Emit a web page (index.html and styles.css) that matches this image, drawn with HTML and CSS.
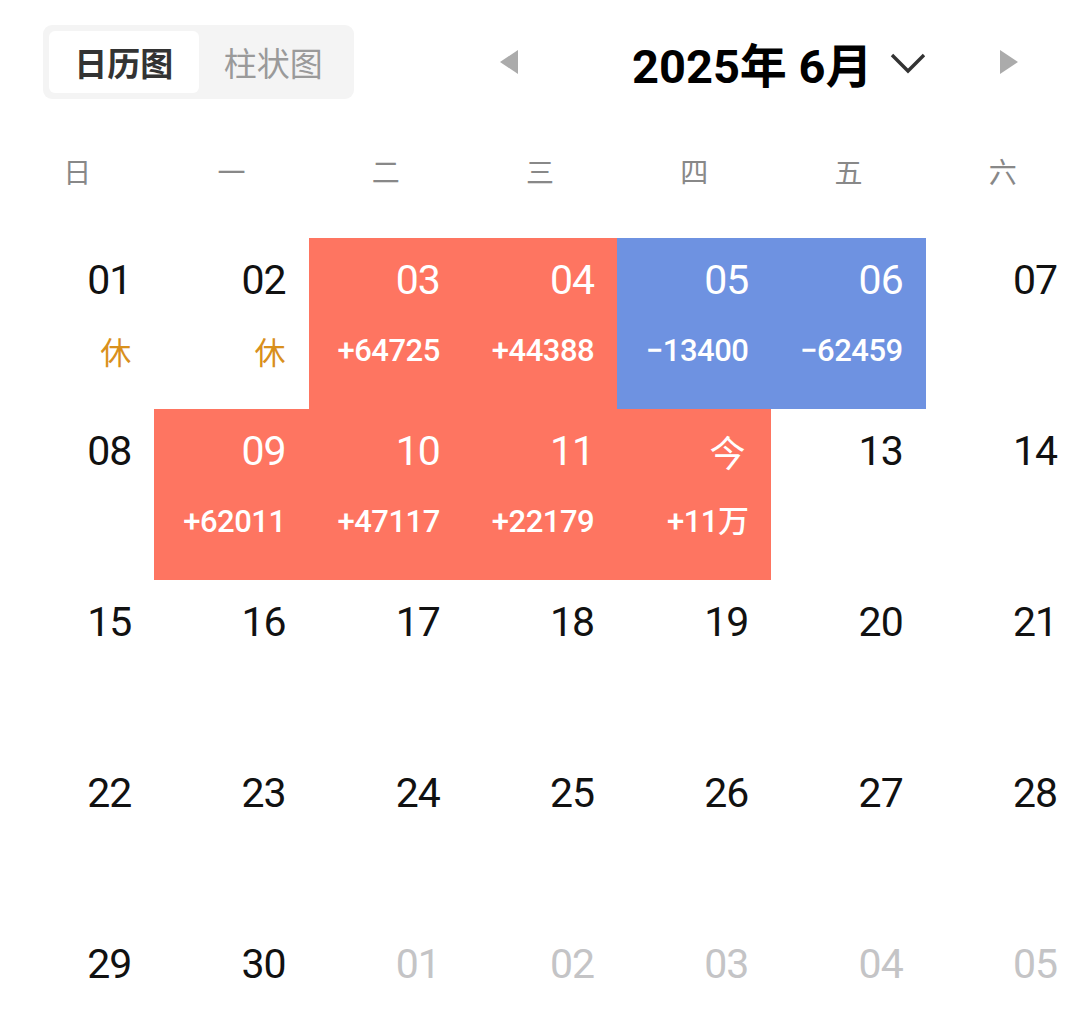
FILE: index.html
```html
<!DOCTYPE html>
<html lang="zh-CN">
<head>
  <meta charset="UTF-8">
  <meta name="viewport" content="width=device-width, initial-scale=1.0">
  <title>收支日历</title>
  <link rel="stylesheet" href="styles.css">
</head>
<body>
  <header class="header">
    <div class="switch">
      <div class="switch-item active">日历图</div>
      <div class="switch-item">柱状图</div>
    </div>
    <div class="month-nav">
      <span class="arrow arrow-left"></span>
      <h1 class="month-title">2025年 6月</h1>
      <svg class="chevron" width="38" height="24" viewBox="0 0 38 24">
        <path d="M3 4 L19 20 L35 4" fill="none" stroke="#333" stroke-width="3.4"/>
      </svg>
      <span class="arrow arrow-right"></span>
    </div>
  </header>

  <div class="weekdays">
    <div>日</div><div>一</div><div>二</div><div>三</div><div>四</div><div>五</div><div>六</div>
  </div>

  <div class="calendar">
    <!-- week 1 -->
    <div class="cell"><div class="day">01</div><div class="sub rest">休</div></div>
    <div class="cell"><div class="day">02</div><div class="sub rest">休</div></div>
    <div class="cell up"><div class="day">03</div><div class="sub">+64725</div></div>
    <div class="cell up"><div class="day">04</div><div class="sub">+44388</div></div>
    <div class="cell down"><div class="day">05</div><div class="sub">−13400</div></div>
    <div class="cell down"><div class="day">06</div><div class="sub">−62459</div></div>
    <div class="cell"><div class="day">07</div></div>
    <!-- week 2 -->
    <div class="cell"><div class="day">08</div></div>
    <div class="cell up"><div class="day">09</div><div class="sub">+62011</div></div>
    <div class="cell up"><div class="day">10</div><div class="sub">+47117</div></div>
    <div class="cell up"><div class="day">11</div><div class="sub">+22179</div></div>
    <div class="cell up"><div class="day today">今</div><div class="sub">+11万</div></div>
    <div class="cell"><div class="day">13</div></div>
    <div class="cell"><div class="day">14</div></div>
    <!-- week 3 -->
    <div class="cell"><div class="day">15</div></div>
    <div class="cell"><div class="day">16</div></div>
    <div class="cell"><div class="day">17</div></div>
    <div class="cell"><div class="day">18</div></div>
    <div class="cell"><div class="day">19</div></div>
    <div class="cell"><div class="day">20</div></div>
    <div class="cell"><div class="day">21</div></div>
    <!-- week 4 -->
    <div class="cell"><div class="day">22</div></div>
    <div class="cell"><div class="day">23</div></div>
    <div class="cell"><div class="day">24</div></div>
    <div class="cell"><div class="day">25</div></div>
    <div class="cell"><div class="day">26</div></div>
    <div class="cell"><div class="day">27</div></div>
    <div class="cell"><div class="day">28</div></div>
    <!-- week 5 -->
    <div class="cell"><div class="day">29</div></div>
    <div class="cell"><div class="day">30</div></div>
    <div class="cell other"><div class="day">01</div></div>
    <div class="cell other"><div class="day">02</div></div>
    <div class="cell other"><div class="day">03</div></div>
    <div class="cell other"><div class="day">04</div></div>
    <div class="cell other"><div class="day">05</div></div>
  </div>
</body>
</html>
```

FILE: styles.css
```css
:root {
  --up-red: #fe7561;
  --down-blue: #6e92e1;
  --rest-gold: #d9901c;
  --muted: #c4c4c6;
}
body {
  font-family: Roboto, "Noto Sans CJK SC", sans-serif;
  margin: 0;
  padding: 0;
  background-color: #ffffff;
  color: #111;
  overflow: hidden;
}
.header {
  display: flex;
  align-items: center;
  padding: 25px 0 0 43px;
}
.switch {
  display: flex;
  width: 311px;
  height: 74px;
  box-sizing: border-box;
  padding: 6px;
  background-color: #f4f4f4;
  border-radius: 9px;
}
.switch-item {
  width: 150px;
  display: flex;
  align-items: center;
  justify-content: center;
  font-family: "Noto Sans CJK SC", sans-serif;
  font-size: 33px;
  color: #9a9a9a;
  border-radius: 6px;
}
.switch-item.active {
  background-color: #fff;
  color: #333;
  font-weight: 700;
}
.month-nav {
  display: flex;
  align-items: center;
  margin-left: 146px;
}
.arrow {
  width: 0;
  height: 0;
  border-top: 12px solid transparent;
  border-bottom: 12px solid transparent;
}
.arrow-left {
  border-right: 18px solid #ababab;
}
.arrow-right {
  border-left: 18px solid #ababab;
  margin-left: 73px;
}
.month-title {
  margin: 0 0 0 114px;
  font-size: 47px;
  font-weight: 700;
  color: #000;
  letter-spacing: 0;
}
.chevron {
  margin-left: 16px;
  margin-top: 2px;
}
.weekdays {
  display: grid;
  grid-template-columns: repeat(7, 1fr);
  margin-top: 41px;
  height: 62px;
  align-items: center;
  text-align: center;
  font-family: "Noto Sans CJK SC", sans-serif;
  font-size: 28px;
  color: #888;
}
.calendar {
  display: grid;
  grid-template-columns: repeat(7, 1fr);
  grid-auto-rows: 171px;
  margin-top: 36px;
}
.cell {
  text-align: right;
  padding: 20px 23px 0 0;
}
.cell.up {
  background-color: var(--up-red);
  color: #fff;
}
.cell.down {
  background-color: var(--down-blue);
  color: #fff;
}
.cell.other {
  color: var(--muted);
}
.day {
  font-size: 41px;
  line-height: 44px;
  font-weight: 400;
  letter-spacing: -1px;
}
.day.today {
  font-family: "Noto Sans CJK SC", sans-serif;
  font-size: 36px;
  margin-right: 4px;
}
.sub {
  margin-top: 31px;
  font-size: 31px;
  line-height: 36px;
  font-weight: 500;
  letter-spacing: -0.5px;
}
.sub.rest {
  color: var(--rest-gold);
  font-family: "Noto Sans CJK SC", sans-serif;
  font-weight: 400;
  letter-spacing: 0;
}
```
